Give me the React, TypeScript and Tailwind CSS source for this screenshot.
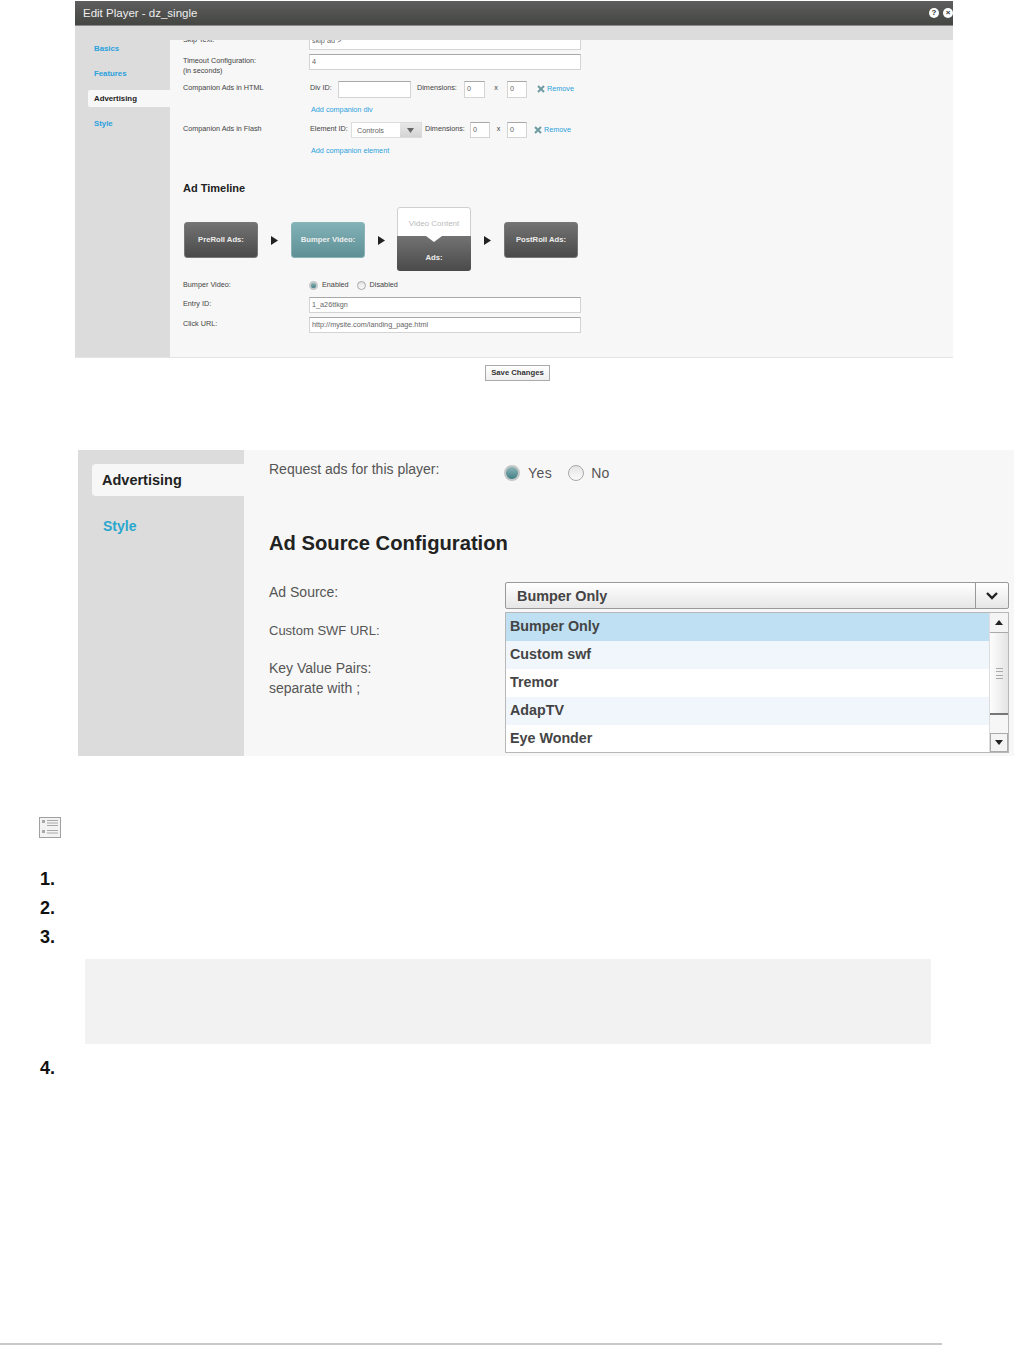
function Arrow() {
  return (
    <svg width="7" height="9" viewBox="0 0 7 9" className="block">
      <polygon points="0,0 7,4.5 0,9" fill="#222" />
    </svg>
  );
}

function Radio({ checked, big }: { checked?: boolean; big?: boolean }) {
  const size = big ? 'w-[16px] h-[16px]' : 'w-[9px] h-[9px]';
  if (checked) {
    return (
      <span className={`${size} shrink-0 rounded-full border-2 border-[#c4c8c8] bg-gradient-to-b from-[#8fb6b8] to-[#3f7f85]`} />
    );
  }
  return <span className={`${size} shrink-0 rounded-full border border-[#a8a8a8] bg-gradient-to-b from-[#e4e4e4] to-[#fbfbfb]`} />;
}

function TextBox({ value, className }: { value?: string; className: string }) {
  return (
    <div className={`bg-white border border-[#d4d4d4] border-t-[#a8a8a8] pl-[2px] flex items-center text-[7.25px] text-[#666] ${className}`}>
      {value}
    </div>
  );
}

function Remove() {
  return (
    <span className="flex items-center gap-[2px] text-[#2aa1dc]">
      <svg width="8" height="8" viewBox="0 0 8 8">
        <path d="M1 1 L7 7 M7 1 L1 7" stroke="#6f9ba3" strokeWidth="2" />
      </svg>
      Remove
    </span>
  );
}

function AdBox({ label, teal }: { label: string; teal?: boolean }) {
  return (
    <div
      className={`w-[74px] h-[36px] mt-[2px] rounded-[3px] flex items-center justify-center text-[7.7px] font-bold text-[#eee] border ${
        teal
          ? 'border-[#8ab3b7] bg-gradient-to-b from-[#82b2b7] to-[#5e9096]'
          : 'border-[#777] bg-gradient-to-b from-[#737373] to-[#4a4a4a]'
      }`}
    >
      {label}
    </div>
  );
}

function TopPanel() {
  return (
    <div className="w-[878px] h-[357px] flex flex-col bg-[#f7f7f7] border-b border-[#e4e4e4]">
      <div className="h-[25px] shrink-0 flex items-center justify-between pl-[8px] bg-gradient-to-b from-[#5e5e5e] to-[#444642] border-b border-[#8a8a8a] text-[11.5px] text-[#eeeeee] relative">
        <span className="pt-px">Edit Player - dz_single</span>
        <div className="flex items-center gap-[4px] overflow-hidden">
          <span className="w-[10px] h-[10px] rounded-full bg-white text-[#333] text-[8px] font-bold leading-[10px] text-center">?</span>
          <span className="w-[10px] h-[10px] rounded-full bg-white text-[#333] text-[8px] font-bold leading-[9px] text-center">×</span>
        </div>
      </div>
      <div className="h-[14px] shrink-0 bg-[#dcdcdc]" />
      <div className="flex-1 flex min-h-0">
        <div className="w-[95px] shrink-0 bg-[#dcdcdc] text-[7.8px] font-bold text-[#2aa1dc]">
          <div className="pl-[19px] mt-[4px] h-[10px] leading-[10px]">Basics</div>
          <div className="pl-[19px] mt-[15px] h-[10px] leading-[10px]">Features</div>
          <div className="ml-[13px] mt-[11px] h-[17px] pl-[6px] flex items-center bg-[#f7f7f7] rounded-l-[2px] text-[#222]">Advertising</div>
          <div className="pl-[19px] mt-[12px] h-[10px] leading-[10px]">Style</div>
        </div>
        <div className="flex-1 pl-[13px] flex flex-col text-[7.25px] text-[#444] whitespace-nowrap">
          <div className="h-[10px] overflow-hidden flex">
            <div className="w-[126px] -mt-[5px] leading-[10px]">Skip Text:</div>
            <TextBox value="skip ad >" className="w-[272px] h-[18px] -mt-[8px] shrink-0" />
          </div>
          <div className="mt-[4px] h-[27px] flex">
            <div className="w-[126px] pt-[2px] leading-[10px]">
              Timeout Configuration:
              <br />
              (in seconds)
            </div>
            <TextBox value="4" className="w-[272px] h-[16px]" />
          </div>
          <div className="h-[23px] flex items-start">
            <div className="w-[127px] pt-[2px] leading-[10px]">Companion Ads in HTML</div>
            <div className="w-[28px] pt-[2px] leading-[10px]">Div ID:</div>
            <TextBox className="w-[73px] h-[17px]" />
            <div className="w-[47px] ml-[6px] pt-[2px] leading-[10px]">Dimensions:</div>
            <TextBox value="0" className="w-[21px] h-[17px]" />
            <div className="w-[22px] pt-[2px] text-center leading-[10px]">x</div>
            <TextBox value="0" className="w-[20px] h-[17px]" />
            <div className="ml-[10px] pt-[3px] leading-[10px]">
              <Remove />
            </div>
          </div>
          <div className="h-[10px] pl-[128px] leading-[12px] text-[#2aa1dc]">Add companion div</div>
          <div className="mt-[8px] h-[23px] flex items-start">
            <div className="w-[127px] pt-[2px] leading-[10px]">Companion Ads in Flash</div>
            <div className="w-[41px] pt-[2px] leading-[10px]">Element ID:</div>
            <div className="w-[71px] h-[16px] flex bg-white border border-[#dcdcdc] text-[7.25px] text-[#666]">
              <span className="flex-1 pl-[5px] leading-[15px]">Controls</span>
              <span className="w-[21px] bg-gradient-to-b from-[#e8e8e8] to-[#d4d4d4] flex items-center justify-center">
                <svg width="7" height="5" viewBox="0 0 7 5">
                  <polygon points="0,0 7,0 3.5,5" fill="#666" />
                </svg>
              </span>
            </div>
            <div className="w-[45px] ml-[3px] pt-[2px] leading-[10px]">Dimensions:</div>
            <TextBox value="0" className="w-[20px] h-[16px]" />
            <div className="w-[17px] pt-[2px] text-center leading-[10px]">x</div>
            <TextBox value="0" className="w-[20px] h-[16px]" />
            <div className="ml-[7px] pt-[3px] leading-[10px]">
              <Remove />
            </div>
          </div>
          <div className="h-[10px] pl-[128px] leading-[12px] text-[#2aa1dc]">Add companion element</div>
          <div className="mt-[26px] h-[14px] leading-[14px] text-[11px] font-bold text-[#222]">Ad Timeline</div>
          <div className="mt-[12px] h-[64px] flex items-center pl-px">
            <AdBox label="PreRoll Ads:" />
            <div className="w-[33px] mt-[2px] flex justify-center"><Arrow /></div>
            <AdBox label="Bumper Video:" teal />
            <div className="w-[32px] mt-[2px] flex justify-center"><Arrow /></div>
            <div className="w-[74px] h-[64px] flex flex-col rounded-[3px] overflow-hidden relative">
              <div className="h-[29px] pt-[3px] bg-white border border-b-0 border-[#d0d0d0] rounded-t-[3px] flex items-center justify-center text-[8px] text-[#bbb]">
                Video Content
              </div>
              <div className="flex-1 bg-gradient-to-b from-[#737373] to-[#4a4a4a] flex items-end justify-center pb-[8px] text-[7.7px] font-bold text-[#eee] leading-[10px]">
                Ads:
              </div>
              <svg width="16" height="6" viewBox="0 0 16 6" className="absolute left-[29px] top-[29px]">
                <polygon points="0,0 16,0 8,6" fill="#fff" />
              </svg>
            </div>
            <div className="w-[33px] mt-[2px] flex justify-center"><Arrow /></div>
            <AdBox label="PostRoll Ads:" />
          </div>
          <div className="mt-[9px] h-[10px] flex items-center leading-[10px]">
            <div className="w-[126px]">Bumper Video:</div>
            <Radio checked />
            <span className="ml-[4px]">Enabled</span>
            <span className="ml-[8px] flex items-center"><Radio /></span>
            <span className="ml-[4px]">Disabled</span>
          </div>
          <div className="mt-[7px] h-[16px] flex">
            <div className="w-[126px] pt-[2px] leading-[10px]">Entry ID:</div>
            <TextBox value="1_a26ttkgn" className="w-[272px] h-[16px]" />
          </div>
          <div className="mt-[4px] h-[16px] flex">
            <div className="w-[126px] pt-[2px] leading-[10px]">Click URL:</div>
            <TextBox value="http://mysite.com/landing_page.html" className="w-[272px] h-[16px]" />
          </div>
        </div>
      </div>
    </div>
  );
}

function Dropdown() {
  const options = [
    { label: 'Bumper Only', bg: 'bg-[#bfe0f2]' },
    { label: 'Custom swf', bg: 'bg-[#f1f6fd]' },
    { label: 'Tremor', bg: 'bg-white' },
    { label: 'AdapTV', bg: 'bg-[#f1f6fd]' },
    { label: 'Eye Wonder', bg: 'bg-white' },
  ];
  return (
    <div className="absolute left-[261px] top-[162px] w-[504px] h-[141px] flex overflow-hidden bg-white border border-[#b8b8b8] text-[14.3px] font-bold text-[#444]">
      <div className="flex-1 flex flex-col">
        {options.map((o) => (
          <div key={o.label} className={`h-[28px] shrink-0 pl-[4px] leading-[26px] ${o.bg}`}>
            {o.label}
          </div>
        ))}
      </div>
      <div className="w-[19px] flex flex-col border-l border-[#ddd]">
        <div className="h-[20px] flex items-center justify-center bg-[#f4f4f4] border-b border-[#aaa]">
          <svg width="8" height="5" viewBox="0 0 8 5"><polygon points="4,0 8,5 0,5" fill="#222" /></svg>
        </div>
        <div className="h-[82px] flex items-center justify-center bg-gradient-to-r from-[#fdfdfd] to-[#e4e4e4] border-b-2 border-[#777]">
          <div className="w-[7px] h-[11px] border-y-4 border-double border-[#aaa]" />
        </div>
        <div className="flex-1 bg-[#f6f6f6]" />
        <div className="h-[19px] flex items-center justify-center bg-[#f4f4f4] border border-[#aaa]">
          <svg width="8" height="5" viewBox="0 0 8 5"><polygon points="0,0 8,0 4,5" fill="#222" /></svg>
        </div>
      </div>
    </div>
  );
}

function AdPanel() {
  return (
    <div className="ml-[78px] mt-[68px] h-[306px] flex bg-[#f7f7f7]">
      <div className="w-[166px] shrink-0 bg-[#dcdcdc] pt-[14px] text-[14.5px] font-bold">
        <div className="ml-[14px] h-[32px] pl-[10px] pt-px flex items-center bg-[#f7f7f7] rounded-l-[4px] text-[#222]">Advertising</div>
        <div className="mt-[20px] pl-[25px] h-[20px] leading-[20px] text-[14px] text-[#2ba6cf]">Style</div>
      </div>
      <div className="flex-1 relative pl-[25px] text-[14px] text-[#555]">
        <div className="mt-[9px] h-[20px] flex items-start leading-[20px]">
          <div className="w-[235px]">Request ads for this player:</div>
          <div className="flex items-center h-[20px] mt-[4px]">
            <Radio checked big />
            <span className="ml-[8px] tracking-[0.5px]">Yes</span>
            <span className="ml-[16px] flex"><Radio big /></span>
            <span className="ml-[7px]">No</span>
          </div>
        </div>
        <div className="mt-[50px] h-[28px] leading-[28px] text-[20.2px] font-bold text-[#222]">Ad Source Configuration</div>
        <div className="mt-[25px] h-[27px] flex leading-[20px]">
          <div className="w-[236px]">Ad Source:</div>
          <div className="w-[504px] h-[27px] flex rounded-[2px] border border-[#999] bg-gradient-to-b from-white to-[#e6e6e6] text-[14.4px] font-bold text-[#444]">
            <span className="flex-1 pl-[11px] leading-[26px]">Bumper Only</span>
            <span className="w-[33px] border-l border-[#999] flex items-center justify-center">
              <svg width="12" height="8" viewBox="0 0 12 8">
                <path d="M1 1 L6 6 L11 1" fill="none" stroke="#222" strokeWidth="2.4" />
              </svg>
            </span>
          </div>
        </div>
        <div className="mt-[12px] h-[20px] leading-[20px] text-[13px]">Custom SWF URL:</div>
        <div className="mt-[17px] leading-[20px]">
          Key Value Pairs:
          <br />
          separate with ;
        </div>
        <Dropdown />
      </div>
    </div>
  );
}

export default function App() {
  return (
    <div className="w-[1014px] h-[1345px] flex flex-col bg-white font-['Liberation_Sans',Arial,sans-serif] overflow-hidden">
      <div className="pl-[75px] pt-px">
        <TopPanel />
        <div className="h-[24px] pl-[410px] pt-[7px]">
          <button className="w-[65px] h-[16px] block bg-gradient-to-b from-white to-[#eee] border border-[#aaa] text-[7.7px] font-bold text-[#333] leading-[14px] text-center">
            Save Changes
          </button>
        </div>
      </div>
      <AdPanel />
      <div className="ml-[39px] mt-[61px] h-[21px]">
        <svg width="22" height="21" viewBox="0 0 22 21" className="block">
          <rect x="0.5" y="0.5" width="21" height="20" fill="#f3f3f3" stroke="#a0a0a0" />
          <rect x="3" y="3" width="3" height="3" fill="#a8a8a8" />
          <rect x="3" y="13" width="3" height="3" fill="#a8a8a8" />
          <path d="M8 3.5H19M8 6H19M8 8.5H19M8 13.5H19M8 16H19" stroke="#a8a8a8" />
        </svg>
      </div>
      <div className="ml-[40px] mt-[27px] text-[18px] leading-[29px] font-bold text-[#111]">
        <div className="h-[29px]">1.</div>
        <div className="h-[29px]">2.</div>
        <div className="h-[29px]">3.</div>
      </div>
      <div className="ml-[85px] mt-[7px] w-[846px] h-[85px] bg-[#f2f2f2]" />
      <div className="ml-[40px] mt-[10px] text-[18px] leading-[29px] font-bold text-[#111]">4.</div>
      <div className="flex-1" />
      <div className="w-[942px] h-[2px] bg-[#c8c8c8]" />
    </div>
  );
}
